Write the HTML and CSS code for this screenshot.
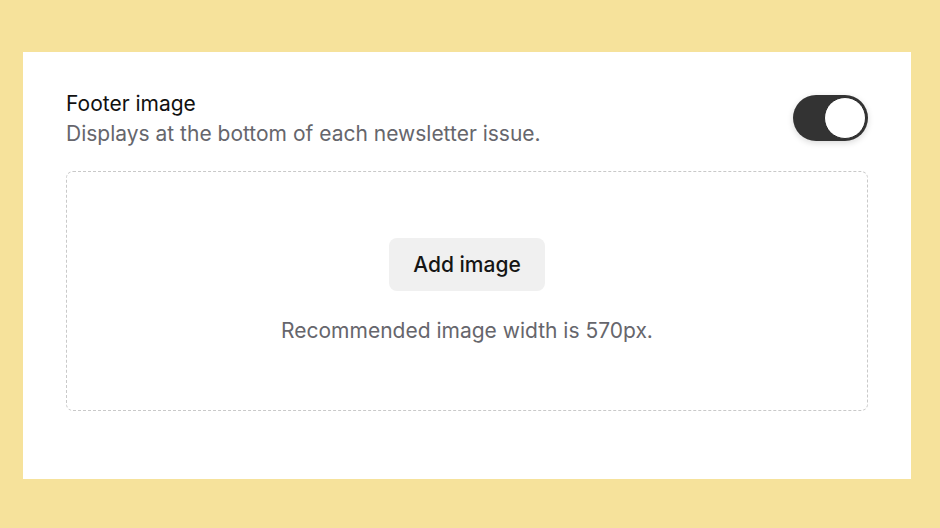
FILE: index.html
```html
<!DOCTYPE html>
<html>
<head>
<meta charset="utf-8">
<link rel="stylesheet" href="styles.css">
</head>
<body>
<div class="card">
  <div class="header">
    <div class="texts">
      <div class="title">Footer image</div>
      <div class="desc">Displays at the bottom of each newsletter issue.</div>
    </div>
    <div class="toggle"><div class="thumb"></div></div>
  </div>
  <div class="dropzone">
    <button class="add-btn">Add image</button>
    <div class="hint">Recommended image width is 570px.</div>
  </div>
</div>
</body>
</html>
```
FILE: styles.css
```css
html, body {
  margin: 0;
  padding: 0;
}
body {
  background: #f6e29b;
  font-family: Inter, "Noto Sans", sans-serif;
  padding: 52px 29px 49px 23px;
  height: 528px;
  box-sizing: border-box;
}
.card {
  background: #fff;
  height: 427px;
  box-sizing: border-box;
  padding: 39px 43px 0 43px;
}
.header {
  display: flex;
  justify-content: space-between;
  align-items: flex-start;
}
.title {
  font-size: 21px;
  line-height: 26px;
  color: #111;
}
.desc {
  font-size: 21px;
  line-height: 30px;
  margin-top: 2px;
  color: #66666c;
}
.toggle {
  width: 75px;
  height: 46px;
  border-radius: 23px;
  background: #333;
  position: relative;
  box-shadow: 0 2px 6px rgba(0,0,0,0.15);
  margin-top: 4px;
}
.thumb {
  position: absolute;
  right: 2px;
  top: 2px;
  width: 40px;
  height: 40px;
  border-radius: 50%;
  background: #fff;
  border: 1px solid #2a2a2a;
}
.dropzone {
  margin-top: 22px;
  height: 240px;
  box-sizing: border-box;
  border: 1px dashed #c9c9c9;
  border-radius: 7px;
  display: flex;
  flex-direction: column;
  align-items: center;
  padding-top: 66px;
}
.add-btn {
  font-family: inherit;
  font-size: 21px;
  font-weight: 500;
  color: #151515;
  background: #f0f0f0;
  border: none;
  border-radius: 8px;
  width: 156px;
  height: 53px;
  padding: 0;
}
.hint {
  margin-top: 26px;
  font-size: 21px;
  line-height: 28px;
  color: #66666c;
}
```
